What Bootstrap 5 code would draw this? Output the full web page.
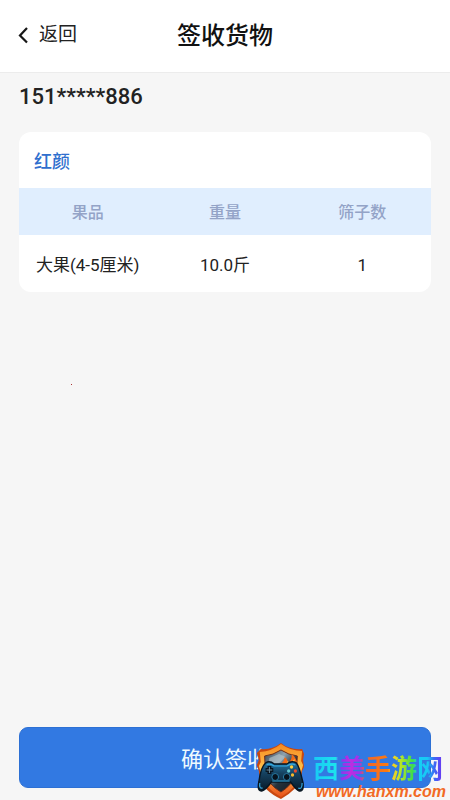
<!DOCTYPE html>
<html lang="zh-CN">
<head>
<meta charset="utf-8">
<meta name="viewport" content="width=device-width, initial-scale=1">
<title>签收货物</title>
<link href="https://cdn.jsdelivr.net/npm/bootstrap@5.3.0/dist/css/bootstrap.min.css" rel="stylesheet">
<style>
body { background: #f6f6f6; color: #222; font-family: Roboto, "Noto Sans CJK SC", sans-serif; }
.topbar { height: 73px; padding: 0 18px 1px; border-bottom: 1px solid #ececec; }
.back { font-size: 19px; line-height: 30px; color: #222; gap: 10px; }
.page-title { font-size: 24px; line-height: 32px; color: #111; font-weight: 500; }
.content { padding: 8px 19px 0; }
.phone { font-size: 22px; line-height: 32px; font-weight: 500; margin-bottom: 19px; }
.goods { border: 0; border-radius: 12px; }
.goods-name { font-size: 18px; line-height: 24px; padding: 18px 15px 14px; color: #2f6fce; font-weight: 500; }
.goods-table { table-layout: fixed; font-size: 16px; line-height: 24px; }
.goods-table th { background: #e0eefe; color: #93a3c7; font-weight: 500; padding: 13px 0 10px; }
.goods-table td { font-size: 17px; padding: 18px 0 15px; color: #222; }
.speck { width: 1px; height: 1px; margin: 92px 0 0 52px; background: #a33; }
.bottom { padding: 0 19px 12px; }
.confirm { height: 61px; border-radius: 9px; font-size: 22px; line-height: 30px; color: #eefaff; background: #3279e2; border: 1px solid #2d70d4; padding: 4px 0 0; }
.confirm:hover { background: #2b6fd4; color: #fff; }
.watermark { right: 4px; bottom: 0; gap: 8px; pointer-events: none; }
.brand { font: 700 26px/34px "Noto Sans CJK SC", sans-serif; color: transparent; -webkit-background-clip: text; background-clip: text;
  background-image: linear-gradient(90deg, #18c9f5 0, #1ce3ed 17%, #7a3bf0 20%, #c02ce0 28%, #9a35ee 35%, #f0642b 39%, #fb7a12 56%, #f9d020 60%, #b5e628 66%, #3edc4a 75%, #14cff5 79%, #18c9f5 86%, #3a6cf5 91%, #6b36f2 97%); }
.site { font: italic 700 16px/16px "Liberation Sans", Arial, sans-serif; color: #f26a25; padding-left: 3px; }
</style>
<script defer src="https://cdn.jsdelivr.net/npm/bootstrap@5.3.0/dist/js/bootstrap.bundle.min.js"></script>
</head>
<body class="min-vh-100 d-flex flex-column position-relative">
<header class="topbar bg-white row g-0 align-items-center">
  <div class="col-3">
    <a href="#" class="back d-inline-flex align-items-center text-decoration-none">
      <svg width="11" height="18" viewBox="0 0 11 18" fill="none" stroke="#171717" stroke-width="2.2" aria-hidden="true"><path d="M9 2 2 9.500 9 16.500"/></svg>返回</a>
  </div>
  <h1 class="page-title col-6 text-center mb-0">签收货物</h1>
</header>
<main class="content flex-grow-1">
  <h2 class="phone">151*****886</h2>
  <section class="goods card overflow-hidden">
    <h3 class="goods-name mb-0">红颜</h3>
    <table class="goods-table w-100 text-center">
      <thead><tr><th scope="col">果品</th><th scope="col">重量</th><th scope="col">筛子数</th></tr></thead>
      <tbody><tr><td>大果(4-5厘米)</td><td>10.0斤</td><td>1</td></tr></tbody>
    </table>
  </section>
  <div class="speck" aria-hidden="true"></div>
</main>
<footer class="bottom">
  <button type="button" class="confirm btn w-100">确认签收</button>
</footer>
<div class="watermark position-absolute d-flex align-items-end">
  <svg width="50" height="58" viewBox="0 0 52 58" preserveAspectRatio="none" aria-hidden="true">
    <defs>
      <linearGradient id="fire" x2="0" y2="1"><stop stop-color="#f58a20"/><stop offset=".45" stop-color="#ffc04a"/><stop offset="1" stop-color="#e8511a"/></linearGradient>
      <linearGradient id="steel" x2="1" y2="1"><stop stop-color="#31404b"/><stop offset=".35" stop-color="#8fa3b0"/><stop offset=".6" stop-color="#26323b"/><stop offset="1" stop-color="#111b25"/></linearGradient>
      <linearGradient id="pad" x2="0" y2="1"><stop stop-color="#2579a8"/><stop offset=".4" stop-color="#15415f"/><stop offset="1" stop-color="#081826"/></linearGradient>
    </defs>
    <path d="M27 1Q36 8 49 7L51 12L50 18L51 25L49 29L48 36Q44 48 27 57Q9 49 5 36L4 29L2 23L4 18L2 11L6 7Q18 8 27 1Z" fill="#c9480f"/>
    <path d="M27 2Q37 9 49 9L48 19L50 23L47 34Q43 46 27 55Q10 46 7 34L4 24L6 20L5 10Q18 9 27 2Z" fill="url(#fire)"/>
    <path d="M27 8Q35 13 44 14L43 31Q39 43 27 50Q14 43 11 31L10 14Q19 13 27 8Z" fill="url(#steel)" stroke="#6b2a17" stroke-width="1"/>
    <path d="M15 16 25 12 32 15 23 23 14 24Z" fill="#b6c3ca" opacity=".65"/>
    <path d="M23 24Q30 22 31 15Q35 18 34 21Q39 18 38 12Q45 17 44 26L39 29Z" fill="#f26a17"/>
    <path d="M27 24Q33 23 34 19L37 22L41 17L42 26Z" fill="#ffce4e"/>
    <path d="M11 21Q15 18 20 22H33Q38 18 43 21Q46 24 50 41Q51 50 46 49Q43 48 37 40H17Q11 48 7 49Q2 49 4 40Q6 25 11 21Z" fill="url(#pad)" stroke="#071622" stroke-width="1.500"/>
    <path d="M12 23Q15 21 20 24H33Q38 21 42 23M5 41Q4 47 8 46M49 41Q49 48 45 46M18 39H36" fill="none" stroke="#35a9df" stroke-width="1.200"/>
    <path d="M15 24V32M11 28H19" stroke="#08131e" stroke-width="4"/>
    <path d="M15 25V31M12 28H18" stroke="#6a8c9c" stroke-width="1"/>
    <circle cx="21" cy="35" r="3.500" fill="#07131e" stroke="#287ba5"/><circle cx="33" cy="35" r="3.500" fill="#07131e" stroke="#287ba5"/>
    <circle cx="38" cy="25" r="1.700" fill="#ffd23b"/><circle cx="42" cy="29" r="1.700" fill="#e84b2b"/><circle cx="39" cy="33" r="1.700" fill="#f4b82d"/><circle cx="35" cy="29" r="1.700" fill="#65c8d1"/>
  </svg>
  <div class="d-flex flex-column">
    <div class="brand">西美手游网</div>
    <div class="site">www.hanxm.com</div>
  </div>
</div>
</body>
</html>
